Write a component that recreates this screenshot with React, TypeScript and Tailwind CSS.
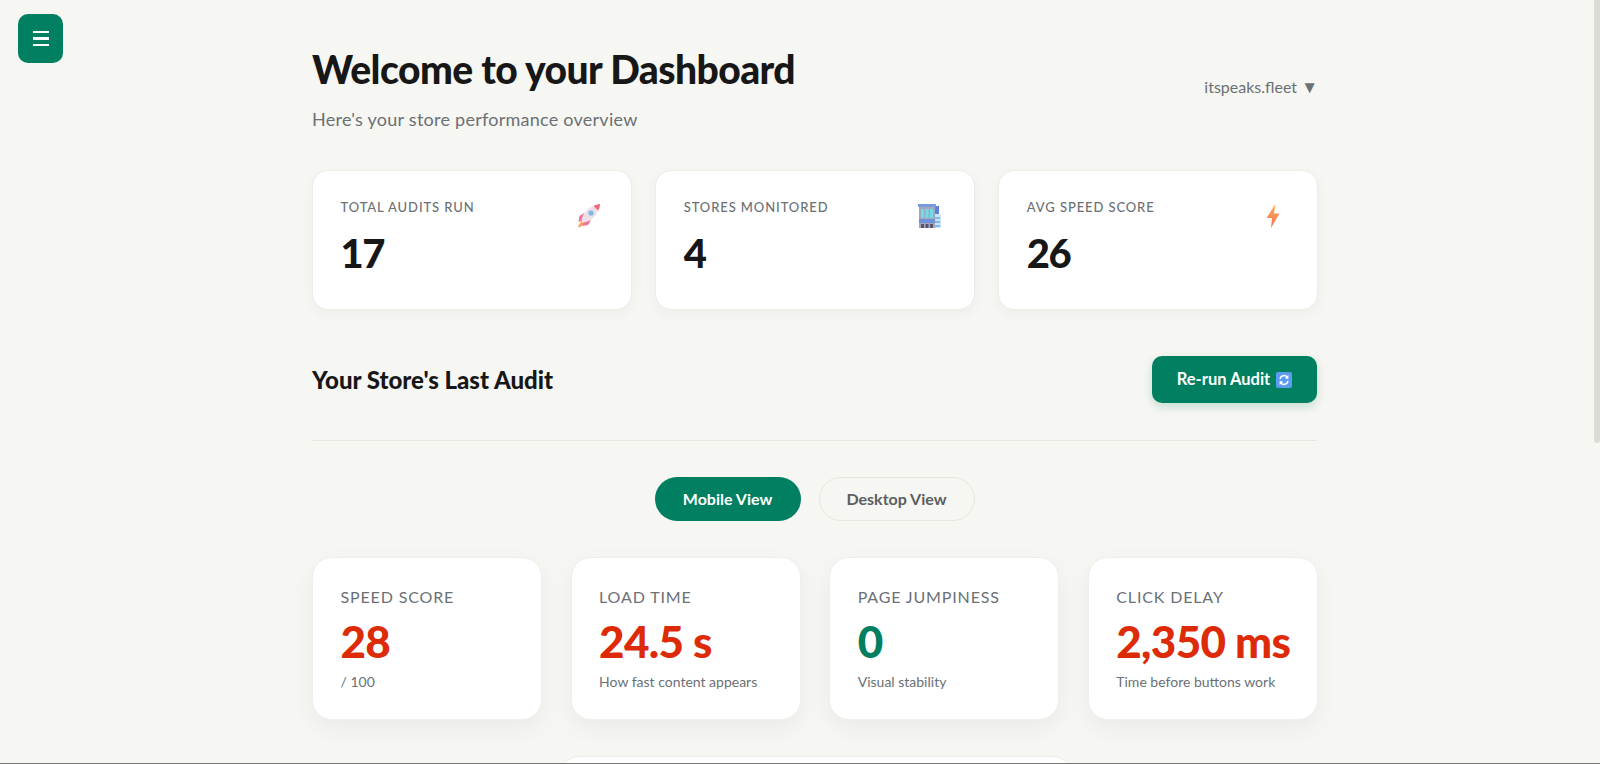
import React from 'react';

const font = { fontFamily: 'Lato, "Noto Sans", sans-serif' };

const RocketIcon = () => (
  <svg width="26" height="26" viewBox="0 0 26 26">
    <path d="M6.5 18 L3 23.5 L4.5 24.5 L9 21 Z" fill="#f7a14c" />
    <path d="M9 10 L4.5 13 L3.5 19 L8 17.5 Z" fill="#f2709a" />
    <path d="M16 17 L13 22 L7 23 L9 18.5 Z" fill="#f2709a" />
    <path d="M6.5 17 C8 10 13 4.5 20 2.5 L23.5 6 C21.5 13 16 18 9 19.5 Z" fill="#ecdfe6" />
    <path d="M18.5 3 C20.5 2 23 1.2 25 1 C25 3 24.4 5.2 23.2 7.5 Z" fill="#f0647c" />
    <circle cx="16" cy="10" r="2.6" fill="#7db8e8" />
  </svg>
);

const BuildingIcon = () => (
  <svg width="24" height="26" viewBox="0 0 24 26">
    <rect x="15" y="3" width="6" height="12" fill="#5a82d8" />
    <rect x="15" y="11" width="8" height="14" fill="#cfe3f6" />
    <rect x="17" y="14" width="5" height="2" fill="#7db8ee" />
    <rect x="17" y="18" width="5" height="2" fill="#7db8ee" />
    <rect x="17" y="22" width="5" height="2" fill="#7db8ee" />
    <rect x="1" y="3" width="16" height="22" fill="#a3a8ba" />
    <rect x="0" y="1" width="18" height="3" fill="#7c9ade" />
    <rect x="3" y="6" width="3" height="9" fill="#6fdcec" />
    <rect x="7.5" y="6" width="3" height="9" fill="#6fdcec" />
    <rect x="12" y="6" width="3" height="9" fill="#6fdcec" />
    <rect x="1" y="16" width="16" height="4" fill="#6f90da" />
    <rect x="3" y="21" width="3" height="4" fill="#5b5570" />
    <rect x="7.5" y="21" width="3" height="4" fill="#5b5570" />
    <rect x="12" y="21" width="3" height="4" fill="#5b5570" />
  </svg>
);

const BoltIcon = () => (
  <svg width="26" height="26" viewBox="0 0 26 26">
    <defs>
      <linearGradient id="bolt" x1="0" y1="0" x2="0" y2="1">
        <stop offset="0" stopColor="#fbb24f" />
        <stop offset="1" stopColor="#f0705c" />
      </linearGradient>
    </defs>
    <path d="M15.5 1 L6.5 15 L12 15 L11 25 L19.5 10.5 L14 10.5 Z" fill="url(#bolt)" />
  </svg>
);

const RefreshIcon = () => (
  <svg width="16" height="16" viewBox="0 0 16 16">
    <rect width="16" height="16" rx="2" fill="#5b9bf0" />
    <path d="M4 7 A4.2 4.2 0 0 1 11.2 5" fill="none" stroke="#fff" strokeWidth="1.5" />
    <path d="M12.4 3 L12.4 7 L8.8 6.2 Z" fill="#fff" />
    <path d="M12 9 A4.2 4.2 0 0 1 4.8 11" fill="none" stroke="#fff" strokeWidth="1.5" />
    <path d="M3.6 13 L3.6 9 L7.2 9.8 Z" fill="#fff" />
  </svg>
);

const statCards = [
  { label: 'TOTAL AUDITS RUN', value: '17', icon: <RocketIcon />, iconClass: 'mr-[30px]' },
  { label: 'STORES MONITORED', value: '4', icon: <BuildingIcon />, iconClass: 'mr-[32px]' },
  { label: 'AVG SPEED SCORE', value: '26', icon: <BoltIcon />, iconClass: 'mr-[31px]' },
];

const metricCards = [
  { label: 'SPEED SCORE', value: '28', note: '/ 100', color: 'text-[#de2b07]' },
  { label: 'LOAD TIME', value: '24.5 s', note: 'How fast content appears', color: 'text-[#de2b07]' },
  { label: 'PAGE JUMPINESS', value: '0', note: 'Visual stability', color: 'text-[#008060]' },
  { label: 'CLICK DELAY', value: '2,350 ms', note: 'Time before buttons work', color: 'text-[#de2b07]' },
];

const App = () => {
  return (
    <div className="relative h-[764px] overflow-hidden bg-[#f6f6f2] border-b border-[#77797a]" style={font}>
      {/* menu button and scrollbar sit over the page */}
      <button className="absolute left-[18px] top-[14px] flex h-[49px] w-[45px] flex-col items-center justify-center gap-[4px] rounded-[10px] bg-[#008060]">
        <span className="h-[2.5px] w-[16px] bg-white" />
        <span className="h-[2.5px] w-[16px] bg-white" />
        <span className="h-[2.5px] w-[16px] bg-white" />
      </button>
      <div className="absolute right-0 top-0 h-[443px] w-[6px] rounded-b-[3px] bg-[#dcdcd7]" />

      <div className="ml-[312px] w-[1006px] pt-[45px]">
        <header className="flex items-end justify-between">
          <div>
            <h1 className="text-[39px] font-black leading-[48px] tracking-[-0.55px] text-[#171717]">Welcome to your Dashboard</h1>
            <p className="mt-[14px] text-[18px] leading-[24px] tracking-[0.25px] text-[#6b7075]">Here's your store performance overview</p>
          </div>
          <div className="mb-[32px] text-[16px] leading-[24px] text-[#6b7075]">itspeaks.fleet <span className="text-[17px]">▼</span></div>
        </header>

        <div className="mt-[39px] grid grid-cols-3 gap-[23.5px]">
          {statCards.map((card) => (
            <div key={card.label} className="flex h-[140px] items-start justify-between rounded-[16px] border border-[#ecece8] bg-white pl-[27.5px] pt-[27px] shadow-[0_4px_14px_rgba(0,0,0,0.04)]">
              <div>
                <div className="text-[13px] font-medium leading-[18px] tracking-[0.9px] text-[#6b7075]">{card.label}</div>
                <div className="mt-[15px] text-[40px] font-black leading-[44px] tracking-[-1.5px] text-[#171717]">{card.value}</div>
              </div>
              <div className={`mt-[5px] ${card.iconClass}`}>{card.icon}</div>
            </div>
          ))}
        </div>

        <div className="mt-[46px] flex items-center justify-between">
          <h2 className="text-[24px] font-black leading-[32px] text-[#171717]">Your Store's Last Audit</h2>
          <button className="mr-[1px] flex h-[47px] w-[165px] items-center justify-center gap-[6px] rounded-[10px] bg-[#008060] text-[16.5px] font-bold text-white shadow-[0_4px_10px_rgba(0,128,96,0.2)]">
            Re-run Audit <RefreshIcon />
          </button>
        </div>

        <div className="mt-[37px] mr-[1px] h-px bg-[#e6e6e1]" />

        <div className="mt-[36px] flex justify-center gap-[18px] pr-[1px]">
          <button className="h-[44px] w-[146px] rounded-full bg-[#008060] text-[16px] font-bold text-white">Mobile View</button>
          <button className="h-[44px] w-[156px] rounded-full border border-[#e6e6e1] text-[16px] font-bold text-[#5c5f62]">Desktop View</button>
        </div>

        <div className="mt-[36px] grid grid-cols-4 gap-[28.4px]">
          {metricCards.map((card) => (
            <div key={card.label} className="h-[163px] rounded-[20px] border border-[#efefeb] bg-white pl-[27.5px] pt-[27px] shadow-[0_8px_24px_rgba(0,0,0,0.05)]">
              <div className="text-[16px] leading-[24px] tracking-[0.85px] text-[#6b7075]">{card.label}</div>
              <div className={`mt-[8px] text-[44px] font-black leading-[48px] tracking-[-0.7px] ${card.color}`}>{card.value}</div>
              <div className="mt-[7px] text-[14px] leading-[20px] text-[#6b7075]">{card.note}</div>
            </div>
          ))}
        </div>

        <div className="ml-[247px] mt-[36px] h-[60px] w-[514px] rounded-[20px] border border-[#ecece8] bg-white" />
      </div>
    </div>
  );
};

export default App;
